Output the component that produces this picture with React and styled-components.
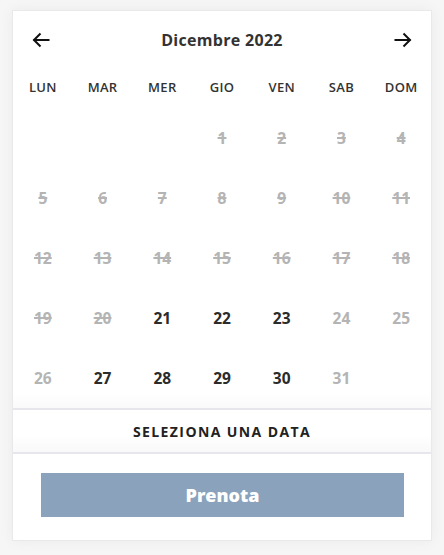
import React from 'react'
import styled, { createGlobalStyle } from 'styled-components'

const GlobalStyle = createGlobalStyle`
  body {
    margin: 0;
    background: #f6f6f6;
    font-family: "Open Sans", "Liberation Sans", sans-serif;
    color: #333;
  }
`

const weekDays = ['LUN', 'MAR', 'MER', 'GIO', 'VEN', 'SAB', 'DOM']

// state: 'past' = struck through, 'off' = grey, 'open' = bookable
const days = [
  null, null, null,
  { n: 1, s: 'past' }, { n: 2, s: 'past' }, { n: 3, s: 'past' }, { n: 4, s: 'past' },
  { n: 5, s: 'past' }, { n: 6, s: 'past' }, { n: 7, s: 'past' }, { n: 8, s: 'past' },
  { n: 9, s: 'past' }, { n: 10, s: 'past' }, { n: 11, s: 'past' },
  { n: 12, s: 'past' }, { n: 13, s: 'past' }, { n: 14, s: 'past' }, { n: 15, s: 'past' },
  { n: 16, s: 'past' }, { n: 17, s: 'past' }, { n: 18, s: 'past' },
  { n: 19, s: 'past' }, { n: 20, s: 'past' }, { n: 21, s: 'open' }, { n: 22, s: 'open' },
  { n: 23, s: 'open' }, { n: 24, s: 'off' }, { n: 25, s: 'off' },
  { n: 26, s: 'off' }, { n: 27, s: 'open' }, { n: 28, s: 'open' }, { n: 29, s: 'open' },
  { n: 30, s: 'open' }, { n: 31, s: 'off' }, null,
]

const ArrowLeft = () => (
  <svg width="18" height="18" viewBox="0 0 18 18" fill="none" stroke="#111" strokeWidth="2" strokeLinecap="square">
    <path d="M16.5 9H2.5" />
    <path d="M8.5 2.5L2 9l6.5 6.5" strokeLinecap="butt" />
  </svg>
)

const ArrowRight = () => (
  <svg width="18" height="18" viewBox="0 0 18 18" fill="none" stroke="#111" strokeWidth="2" strokeLinecap="square">
    <path d="M1.5 9H15.5" />
    <path d="M9.5 2.5L16 9l-6.5 6.5" strokeLinecap="butt" />
  </svg>
)

const App = () => {
  return (
    <>
      <GlobalStyle />
      <Page>
        <Card>
          <Header>
            <NavBtn type="button"><ArrowLeft /></NavBtn>
            <Month>Dicembre 2022</Month>
            <NavBtn type="button"><ArrowRight /></NavBtn>
          </Header>
          <WeekRow>
            {weekDays.map(d => <WeekDay key={d}>{d}</WeekDay>)}
          </WeekRow>
          <DaysGrid>
            {days.map((d, i) => (
              <Day key={i} $state={d ? d.s : 'empty'}>{d ? d.n : ''}</Day>
            ))}
          </DaysGrid>
          <Selected>SELEZIONA UNA DATA</Selected>
          <Footer>
            <BookBtn type="button">Prenota</BookBtn>
          </Footer>
        </Card>
      </Page>
    </>
  )
}

export default App

const Page = styled.div`
  padding: 10px 12px 14px 12px;
`
const Card = styled.div`
  width: 420px;
  box-sizing: border-box;
  background: #fff;
  border: 1px solid #e9e9ec;
  box-shadow: 0 0 14px rgba(0, 0, 0, 0.05);
  display: flex;
  flex-direction: column;
`
const Header = styled.div`
  height: 55px;
  display: flex;
  align-items: center;
  justify-content: space-between;
  padding: 2px 19px 0 19px;
  box-sizing: border-box;
`
const NavBtn = styled.button`
  border: none;
  background: none;
  padding: 0;
  width: 18px;
  height: 18px;
  display: flex;
  cursor: pointer;
`
const Month = styled.div`
  font-size: 16px;
  font-weight: 700;
  letter-spacing: 0.3px;
  color: #333;
`
const WeekRow = styled.div`
  display: grid;
  grid-template-columns: repeat(7, 1fr);
  height: 42px;
  align-items: center;
`
const WeekDay = styled.div`
  text-align: center;
  font-size: 13px;
  font-weight: 600;
  color: #333;
  letter-spacing: 0.3px;
`
const DaysGrid = styled.div`
  display: grid;
  grid-template-columns: repeat(7, 1fr);
  grid-auto-rows: 60px;
  align-items: center;
  background: linear-gradient(to bottom, #fff 0, #fff 285px, #fafafb 300px);
`
const Day = styled.div`
  text-align: center;
  font-size: 15.5px;
  font-weight: 700;
  color: ${p => (p.$state === 'open' ? '#2b2b2b' : '#b4b4b4')};
  text-decoration: ${p => (p.$state === 'past' ? 'line-through' : 'none')};
  text-decoration-thickness: 2px;
`
const Selected = styled.div`
  border-top: 2px solid #e6e6ec;
  border-bottom: 2px solid #e6e6ec;
  height: 42px;
  display: flex;
  align-items: center;
  justify-content: center;
  font-size: 14px;
  font-weight: 700;
  letter-spacing: 1.4px;
  color: #222;
  background: linear-gradient(to bottom, #fff 60%, #f9f9fa);
`
const Footer = styled.div`
  padding: 19px 27px 23px 28px;
  display: flex;
`
const BookBtn = styled.button`
  flex: 1;
  height: 44px;
  border: none;
  background: #8aa2bb;
  color: #fff;
  font-family: "Open Sans", "Liberation Sans", sans-serif;
  font-size: 18px;
  font-weight: 800;
  cursor: default;
`
